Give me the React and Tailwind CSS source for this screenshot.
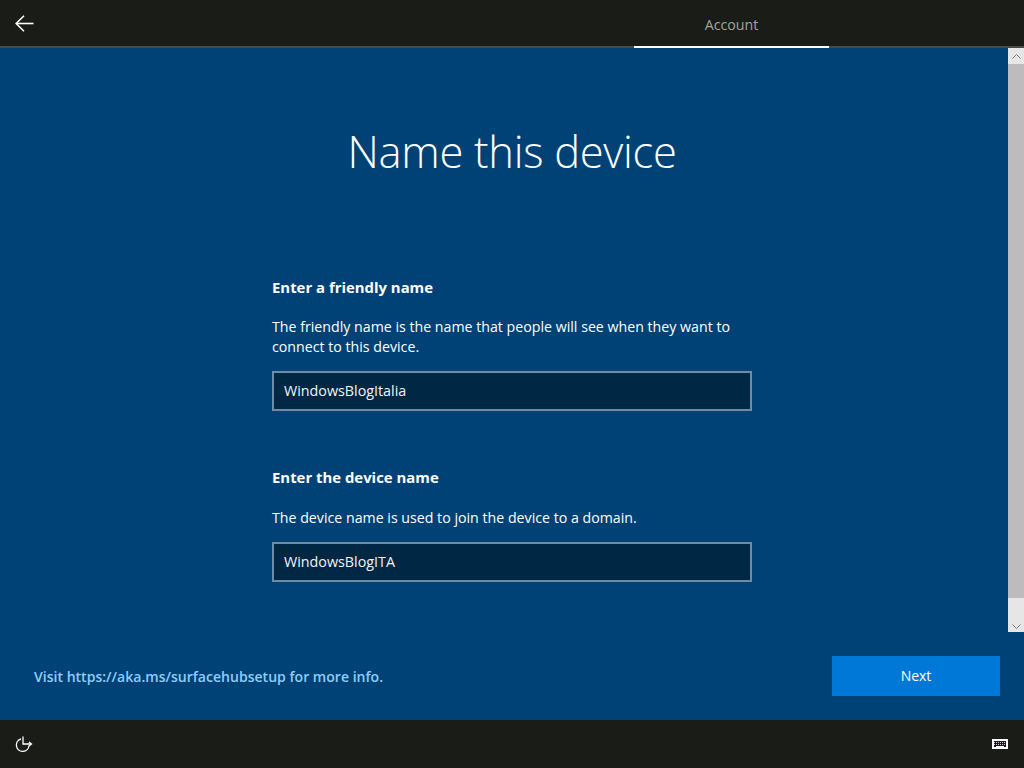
const Field = ({ value }) => (
	<div className="mt-[14px] h-10 w-[480px] border-2 border-[#6f8ba6] bg-[#002743] pl-[10px] text-[14.3px] leading-[36px] text-[#f2f5f8]">
		{value}
	</div>
);

const App = () => {
	return (
		<div className="flex h-[768px] w-[1024px] flex-col overflow-hidden bg-[#004275] font-['Open_Sans',sans-serif] text-white">
			<div className="flex h-12 shrink-0 items-end border-b-2 border-[#4a4a4a] bg-[#1a1c18]">
				<div className="flex h-[46px] w-[634px] items-center pl-[15px]">
					<svg width="19" height="17" viewBox="0 0 19 17" fill="none" stroke="white" strokeWidth="1.6">
						<path d="M9 0.8 L1.2 8.5 L9 16.2" />
						<path d="M1.5 8.5 H18.5" />
					</svg>
				</div>
				<div className="relative flex h-[46px] w-[195px] items-center justify-center pt-[3px] text-[14.2px] text-[#a3a3a0]">
					Account
					<div className="absolute -bottom-[2px] left-0 h-[2px] w-full bg-white"></div>
				</div>
			</div>

			<div className="flex h-[584px] shrink-0">
				<div className="flex flex-1 flex-col items-center pl-4 pt-[73px]">
					<h1 className="text-[43.5px] font-light leading-[62px] tracking-[-0.3px]">Name this device</h1>
					<div className="mt-[94px] w-[480px] text-[14.2px]">
						<div className="text-[14.9px] font-bold leading-5">Enter a friendly name</div>
						<p className="mt-[20px] leading-5">
							The friendly name is the name that people will see when they want to connect to this device.
						</p>
						<Field value="WindowsBlogItalia" />
						<div className="mt-[56px] text-[14.9px] font-bold leading-5">Enter the device name</div>
						<p className="mt-[21px] leading-5">The device name is used to join the device to a domain.</p>
						<Field value="WindowsBlogITA" />
					</div>
				</div>
				<div className="flex w-4 flex-col bg-[#e6e6e6]">
					<div className="flex h-4 items-center justify-center">
						<svg width="9" height="5" viewBox="0 0 9 5" fill="none" stroke="#7a7a7a">
							<path d="M0.5 4.5 L4.5 0.5 L8.5 4.5" />
						</svg>
					</div>
					<div className="flex-1 bg-[#bdbbbd]"></div>
					<div className="flex h-[34px] items-end justify-center pb-[3px]">
						<svg width="9" height="5" viewBox="0 0 9 5" fill="none" stroke="#7a7a7a">
							<path d="M0.5 0.5 L4.5 4.5 L8.5 0.5" />
						</svg>
					</div>
				</div>
			</div>

			<div className="flex h-[88px] shrink-0 items-center justify-between pl-[34px] pr-6">
				<a className="pt-[1px] text-[14.05px] font-semibold text-[#8ccdfa]">Visit https://aka.ms/surfacehubsetup for more info.</a>
				<button className="h-10 w-[168px] bg-[#0078d7] text-sm text-white">Next</button>
			</div>

			<div className="flex h-12 shrink-0 items-center justify-between bg-[#1a1c18] pl-[15px] pr-4">
				<svg width="18" height="16" viewBox="0 0 18 16" fill="none" stroke="white" strokeWidth="1.3">
					<path d="M6 3 A6.3 6.3 0 1 0 14 9.5" />
					<path d="M8 0.5 V8 H16" />
					<path d="M14 6 L16.5 8 L14 10" />
				</svg>
				<svg width="16" height="10" viewBox="0 0 16 10" fill="none">
					<rect x="0.5" y="0.5" width="15" height="9" stroke="white" fill="white" />
					<rect x="2" y="2" width="12" height="6" fill="#1a1c18" />
					<path d="M2 3.5 H14 M2 5.5 H14" stroke="#e8b8f0" strokeDasharray="1 1" />
					<path d="M4 7.5 H12" stroke="white" />
				</svg>
			</div>
		</div>
	);
};

export default App;
